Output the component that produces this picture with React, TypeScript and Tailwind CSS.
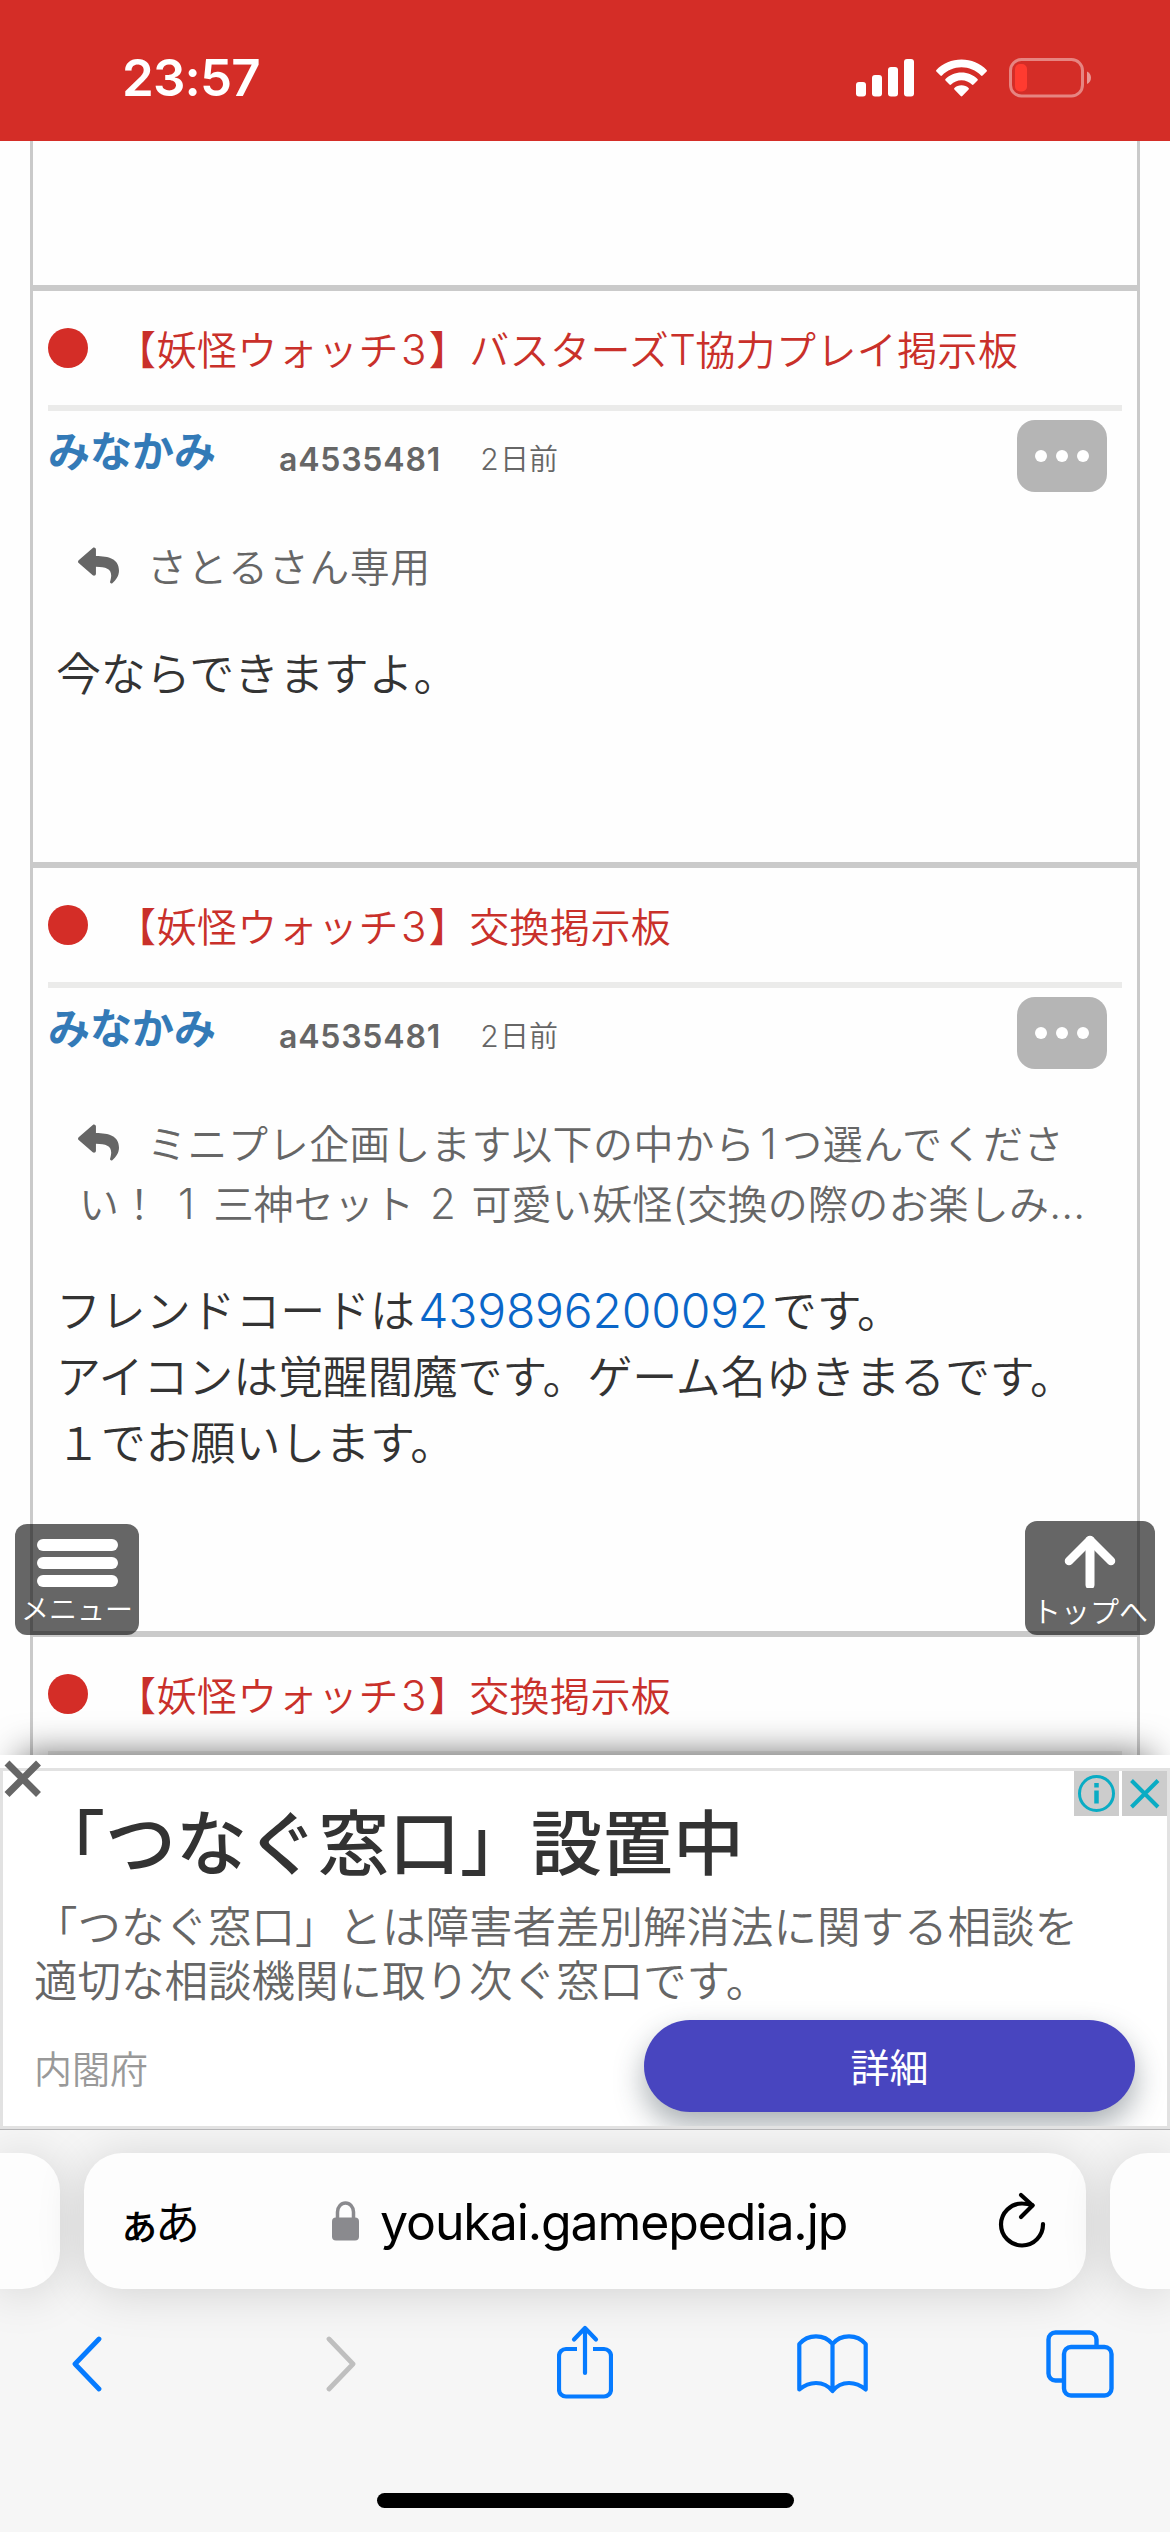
import type { ReactNode } from "react";

const jp = "font-['Noto_Sans_CJK_JP',sans-serif]";

function Latin({ w, children }: { w: string; children: ReactNode }) {
  return (
    <span className={`inline-block text-center leading-none font-light font-['Inter',sans-serif] text-[42px] ${w}`}>
      {children}
    </span>
  );
}

function StatusBar() {
  return (
    <header className="flex h-[141px] shrink-0 items-start bg-[#d42d27] pt-[48px] pr-[78px] pl-[122px] text-white">
      <span className="font-['Inter',sans-serif] text-[51px] leading-[60px] font-semibold tracking-[-0.8px]">23:57</span>
      <div className="ml-auto flex h-[60px] items-center">
        <svg width="58" height="38" viewBox="0 0 58 38" fill="white">
          <rect x="0" y="23" width="10" height="14.5" rx="3" />
          <rect x="16" y="16" width="10" height="21.5" rx="3" />
          <rect x="32" y="8" width="10" height="29.5" rx="3" />
          <rect x="48" y="0" width="10" height="37.5" rx="3" />
        </svg>
        <svg className="ml-[22px]" width="51" height="38" viewBox="0 0 51 38" fill="white">
          <path d="M25.500 0.500C35.200 0.500 44.200 4.400 50.600 10.900c.5.5.5 1.100 0 1.600l-4 4c-.5.5-1.100.5-1.600 0C39.800 11.300 33 8.300 25.500 8.300S11.200 11.300 6 16.500c-.5.5-1.100.5-1.600 0l-4-4c-.5-.5-.5-1.100 0-1.600C6.800 4.400 15.800.5 25.500.5z" />
          <path d="M25.500 13.400c6.200 0 11.900 2.500 16 6.500.5.5.5 1.100 0 1.600l-4 4c-.5.5-1.100.5-1.600 0-2.700-2.600-6.300-4.200-10.400-4.200s-7.700 1.600-10.400 4.200c-.5.5-1.100.5-1.600 0l-4-4c-.5-.5-.5-1.100 0-1.600 4.100-4 9.800-6.500 16-6.500z" />
          <path d="M25.500 26.200c2.800 0 5.300 1 7.100 2.700.5.5.5 1.100 0 1.600l-6.300 6.600c-.5.5-1.200.5-1.600 0l-6.300-6.600c-.5-.5-.5-1.100 0-1.600 1.800-1.700 4.300-2.700 7.100-2.700z" />
        </svg>
        <svg className="ml-[22px]" width="83" height="40" viewBox="0 0 83 40">
          <rect x="1.500" y="1.500" width="72" height="36.500" rx="11" fill="none" stroke="white" strokeOpacity=".42" strokeWidth="3" />
          <rect x="6" y="6" width="12" height="27.500" rx="5" fill="#ff3b30" />
          <path d="M78 13.500c2.500 1 4 3.500 4 6.300s-1.500 5.300-4 6.300z" fill="white" fillOpacity=".5" />
        </svg>
      </div>
    </header>
  );
}

function PostTitle({ children }: { children: ReactNode }) {
  return (
    <div className="mx-[15px] flex h-[120px] shrink-0 items-center border-b-6 border-[#ebebea] text-[#c9302a]">
      <span className="size-[40px] rounded-full bg-[#d42d27]" />
      <h2 className="ml-[28px] text-[40px] leading-[60px] font-[350] tracking-[0.4px] whitespace-nowrap">
        【妖怪ウォッチ<Latin w="w-[30px]">3</Latin>】{children}
      </h2>
    </div>
  );
}

function PostMeta() {
  return (
    <div className="flex h-[81px] items-start pt-[9px] pr-[30px] pl-[15px]">
      <a className="w-[231px] text-[42px] leading-[58px] font-semibold text-[#337ab7]">みなかみ</a>
      <span className="w-[200px] font-['Inter',sans-serif] text-[32px] leading-[79px] font-semibold tracking-[0.8px] text-[#666]">
        a4535481
      </span>
      <span className="text-[29px] leading-[74px] font-[350] text-[#666]">
        <span className="inline-block w-[21px] text-center font-['Inter',sans-serif] text-[30px] leading-none font-light">2</span>
        日前
      </span>
      <button className="ml-auto flex h-[72px] w-[90px] items-center justify-center gap-[9px] rounded-[18px] bg-[#b5b5b5]">
        <i className="size-[12px] rounded-full bg-white" />
        <i className="size-[12px] rounded-full bg-white" />
        <i className="size-[12px] rounded-full bg-white" />
      </button>
    </div>
  );
}

function ReplyIcon() {
  return (
    <svg className="mr-[28px] inline-block" width="41" height="41" viewBox="0 0 512 512" fill="#666">
      <path d="M8.309 189.836L184.313 37.851C199.719 24.546 224 35.347 224 56.015v80.053c160.629 1.839 288 34.032 288 186.258 0 61.441-39.581 122.309-83.333 154.132-13.653 9.931-33.111-2.533-28.077-18.631 45.344-145.012-21.507-183.51-176.59-185.742V360c0 20.7-24.3 31.453-39.687 18.164l-176.004-152c-11.071-9.562-11.086-26.753 0-36.328z" />
    </svg>
  );
}

function Post({ title, quote, children }: { title: ReactNode; quote: ReactNode; children: ReactNode }) {
  return (
    <article className="shrink-0 border-x-3 border-b-6 border-[#cacaca]">
      <PostTitle>{title}</PostTitle>
      <PostMeta />
      <div className="mt-[43px] pl-[45px] text-[40px] leading-[60px] font-[350] tracking-[0.2px] whitespace-nowrap text-[#666]">
        {quote}
      </div>
      <div className="mt-[44px] pb-[157px] pl-[23px] text-[45px] leading-[66px] font-[350] tracking-[-0.15px] whitespace-nowrap text-[#333]">
        {children}
      </div>
    </article>
  );
}

function QuoteFirst({ children }: { children: ReactNode }) {
  return (
    <div className="flex h-[60px] items-center">
      <ReplyIcon />
      <span className="tracking-[0.550px]">{children}</span>
    </div>
  );
}

function Feed() {
  return (
    <main className="relative flex h-[1614px] shrink-0 flex-col overflow-hidden bg-[#fefefe] px-[30px]">
      <div className="h-[150px] shrink-0 border-x-3 border-b-6 border-[#cacaca]" />
      <Post
        title={
          <>
            バスターズ<Latin w="w-[26px]">T</Latin>協力プレイ掲示板
          </>
        }
        quote={<QuoteFirst>さとるさん専用</QuoteFirst>}
      >
        <p>今ならできますよ。</p>
      </Post>
      <Post
        title="交換掲示板"
        quote={
          <>
            <QuoteFirst>
              ミニプレ企画します以下の中から<Latin w="w-[27px]">1</Latin>つ選んでくださ
            </QuoteFirst>
            <p className="pl-[1px]">
              い！<Latin w="w-[54px]">1</Latin>三神セット<Latin w="w-[57px]">2</Latin>可愛い妖怪
              <Latin w="w-[15px]">(</Latin>交換の際のお楽しみ<Latin w="w-[35px]">...</Latin>
            </p>
          </>
        }
      >
        <p>
          フレンドコードは
          <a className="inline-block w-[357px] text-center font-['Inter',sans-serif] text-[48px] leading-none font-light text-[#0a66c8]">
            439896200092
          </a>
          です。
        </p>
        <p>アイコンは覚醒閻魔です。ゲーム名ゆきまるです。</p>
        <p>１でお願いします。</p>
      </Post>
      <article className="shrink-0 border-x-3 border-[#cacaca]">
        <PostTitle>交換掲示板</PostTitle>
      </article>

      <button className="absolute top-[1383px] left-[15px] flex h-[111px] w-[124px] flex-col items-center rounded-[12px] bg-black/60 pt-[15px] text-white">
        <i className="h-[12px] w-[81px] rounded-full bg-white" />
        <i className="mt-[6px] h-[12px] w-[81px] rounded-full bg-white" />
        <i className="mt-[6px] h-[12px] w-[81px] rounded-full bg-white" />
        <span className="text-[28px] leading-[42px] font-[350] whitespace-nowrap">メニュー</span>
      </button>
      <button className="absolute top-[1380px] right-[15px] flex h-[114px] w-[130px] flex-col items-center rounded-[12px] bg-black/60 pt-[13px] text-white">
        <svg width="52" height="54" viewBox="0 0 52 54" fill="none" stroke="white" strokeLinecap="round" strokeLinejoin="round">
          <path d="M26 6.500V51" strokeWidth="9" />
          <path d="M5 27L26 6L47 27" strokeWidth="8.500" />
        </svg>
        <span className="text-[29px] leading-[45px] font-[350] whitespace-nowrap">トップへ</span>
      </button>
      <div className="absolute right-[20px] bottom-[-60px] left-[20px] h-[60px] shadow-[0_0_36px_rgba(0,0,0,0.6)]" />
    </main>
  );
}

function AdBanner() {
  return (
    <aside className="relative h-[374px] shrink-0 bg-white pt-[13px]">
      <div className="relative flex h-[361px] flex-col overflow-hidden border-3 border-[#e2e2e2] pr-[32px] pl-[31px] text-[#666]">
        <h3 className="mt-[23px] text-[71px] leading-[88px] font-medium whitespace-nowrap text-[#333]">
          「つなぐ窓口」設置中
        </h3>
        <p className="mt-[16px] text-[43.500px] leading-[54px] font-[350] whitespace-nowrap">
          「つなぐ窓口」とは障害者差別解消法に関する相談を
          <br />
          適切な相談機関に取り次ぐ窓口です。
        </p>
        <div className="mt-[14px] flex h-[92px] items-center justify-between">
          <span className="text-[38px] font-[350] text-[#999]">内閣府</span>
          <button className="h-[92px] w-[491px] rounded-full bg-[#4845bf] pb-[2px] text-[39px] text-white shadow-[0_14px_30px_rgba(40,55,65,0.4)]">
            詳細
          </button>
        </div>
        <div className="absolute top-0 right-0 flex gap-[3px] text-[#0aacc4]">
          <svg className="bg-[#cccccc]" width="45" height="45" viewBox="0 0 45 45" fill="none" stroke="currentColor">
            <circle cx="22.500" cy="22.500" r="17" strokeWidth="3" />
            <path d="M22.500 19.500v13" strokeWidth="4.500" />
            <path d="M22.500 12v4.500" strokeWidth="4.500" />
          </svg>
          <svg className="bg-[#cccccc]" width="45" height="45" viewBox="0 0 45 45" stroke="currentColor" strokeWidth="4">
            <path d="M9.500 9.500L36 36M36 9.500L9.500 36" />
          </svg>
        </div>
      </div>
      <svg className="absolute top-[5px] left-[4px]" width="38" height="38" viewBox="0 0 38 38" stroke="#666" strokeWidth="7">
        <path d="M3 3L34.500 34.500M34.500 3L3 34.500" />
      </svg>
    </aside>
  );
}

function Browser() {
  const card = "h-[136px] shrink-0 bg-[#fdfdfd] shadow-[0_4px_48px_rgba(0,0,0,0.15)]";
  return (
    <footer className="h-[403px] shrink-0 overflow-hidden border-t border-[#b5b5b7] bg-[#f6f6f6]">
      <div className="flex pt-[23px]">
        <div className={`w-[60px] rounded-r-[38px] ${card}`} />
        <div className={`mx-[24px] flex w-[1002px] items-center rounded-[38px] text-black ${card}`}>
          <span className="ml-[34px] w-[214px] font-medium whitespace-nowrap">
            <span className="text-[42px] tracking-[-5px]">ぁ</span>
            <span className="text-[45px] font-normal">あ</span>
          </span>
          <svg width="27" height="40" viewBox="0 0 27 40">
            <path d="M5.500 18V11a8 9 0 0 1 16 0v7" fill="none" stroke="#8a8a8e" strokeWidth="3.500" />
            <rect y="16.500" width="27" height="23" rx="4" fill="#8a8a8e" />
          </svg>
          <span className="ml-[21px] pt-[2px] font-['Inter',sans-serif] text-[50px] leading-none tracking-[-1.100px]">
            youkai.gamepedia.jp
          </span>
          <svg
            className="mr-[40px] ml-auto mb-[3px]"
            width="48"
            height="58"
            viewBox="0 0 48 58"
            fill="none"
            stroke="black"
            strokeWidth="4.200"
            strokeLinecap="round"
            strokeLinejoin="round"
          >
            <path d="M34.500 14.300C31 13 27.500 12.500 24.500 12.500A21 21 0 1 0 45 33" />
            <path d="M23 4L34.500 14.500L23 26" />
          </svg>
        </div>
        <div className={`w-[60px] rounded-l-[38px] ${card}`} />
      </div>
      <nav className="mt-[31px] flex h-[88px] items-center pl-[71px] text-[#067bff]">
        <svg width="31" height="56" viewBox="0 0 31 56" fill="none" stroke="currentColor" strokeWidth="4.800" strokeLinecap="round" strokeLinejoin="round">
          <path d="M28 3L4 28L28 53" />
        </svg>
        <svg className="ml-[224px] text-[#bfbfbf]" width="31" height="56" viewBox="0 0 31 56" fill="none" stroke="currentColor" strokeWidth="4.800" strokeLinecap="round" strokeLinejoin="round">
          <path d="M3 3L27 28L3 53" />
        </svg>
        <svg className="ml-[200px] mb-[4px]" width="56" height="74" viewBox="0 0 56 74" fill="none" stroke="currentColor" strokeWidth="4.200" strokeLinecap="round" strokeLinejoin="round">
          <path d="M20 24H9a7 7 0 0 0-7 7v33.500a7 7 0 0 0 7 7h38a7 7 0 0 0 7-7V31a7 7 0 0 0-7-7H36" strokeLinecap="butt" />
          <path d="M28 48V3.500M17 14.500L28 3L39 14.500" />
        </svg>
        <svg className="ml-[184px]" width="71" height="60" viewBox="0 0 71 60" fill="none" stroke="currentColor" strokeWidth="4.200" strokeLinecap="round" strokeLinejoin="round">
          <path d="M35.500 10C31.500 5 25.500 2.300 19 2.300S6.500 5 2.300 10v45.500C7 51.500 13 49 19 49s12.500 3 16.500 8c4-5 10.500-8 16.500-8s12 2.500 16.700 6.500V10C64.500 5 58.500 2.300 52 2.300S39.500 5 35.500 10V56" />
        </svg>
        <svg className="ml-[178px]" width="68" height="68" viewBox="0 0 68 68" fill="none" stroke="currentColor" strokeWidth="4.400">
          <path d="M17 50.500H9.500a7 7 0 0 1-7-7V9.500a7 7 0 0 1 7-7h34a7 7 0 0 1 7 7v7" />
          <rect x="18" y="17" width="47.500" height="48.500" rx="7" />
        </svg>
      </nav>
      <div className="mx-auto mt-[85px] h-[15px] w-[417px] rounded-full bg-black" />
    </footer>
  );
}

export default function App() {
  return (
    <div className={`flex h-[2532px] w-[1170px] flex-col overflow-hidden bg-white ${jp}`} lang="ja">
      <StatusBar />
      <Feed />
      <AdBanner />
      <Browser />
    </div>
  );
}
